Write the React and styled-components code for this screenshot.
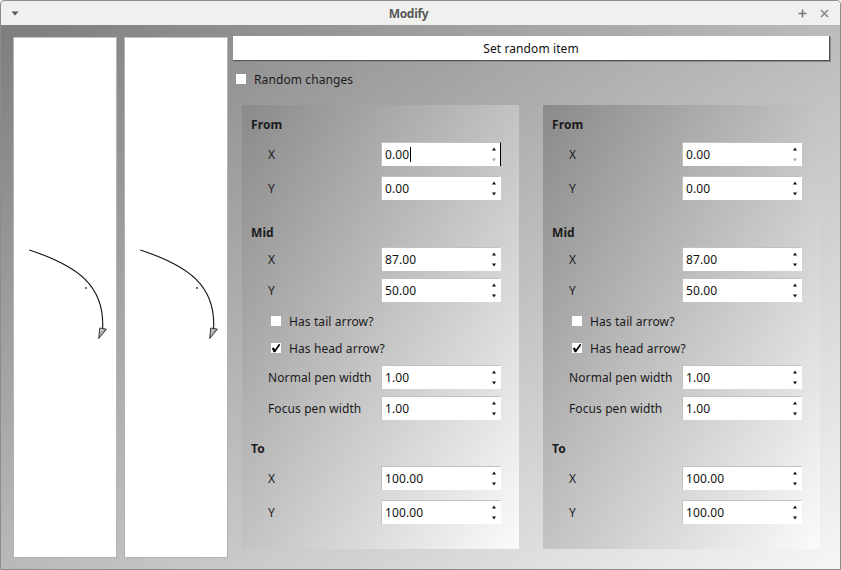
import React from 'react';
import styled, {createGlobalStyle} from 'styled-components';

const Global = createGlobalStyle`
    html, body {
        margin: 0;
        padding: 0;
        background: #ffffff;
    }

    body {
        font-family: "Noto Sans", "Open Sans", sans-serif;
        font-size: 12px;
        letter-spacing: 0.1px;
        color: #1b1b1b;
    }
`;

const sections = [
    {
        title: 'From',
        rows: [
            {kind: 'spin', label: 'X', value: '0.00', mt: 7, min: true},
            {kind: 'spin', label: 'Y', value: '0.00', mt: 10},
        ],
        mt: 0,
    },
    {
        title: 'Mid',
        rows: [
            {kind: 'spin', label: 'X', value: '87.00', mt: 4},
            {kind: 'spin', label: 'Y', value: '50.00', mt: 7},
            {kind: 'check', label: 'Has tail arrow?', checked: false, mt: 9},
            {kind: 'check', label: 'Has head arrow?', checked: true, mt: 7},
            {kind: 'spin', label: 'Normal pen width', value: '1.00', mt: 7},
            {kind: 'spin', label: 'Focus pen width', value: '1.00', mt: 7},
        ],
        mt: 23,
    },
    {
        title: 'To',
        rows: [
            {kind: 'spin', label: 'X', value: '100.00', mt: 7},
            {kind: 'spin', label: 'Y', value: '100.00', mt: 10},
        ],
        mt: 19,
    },
];

// heavy tick like the one in the checked box
const Tick = () => (
    <svg width="10" height="10" viewBox="0 0 10 10">
        <path d="M0.8 5.2 L2.9 4.4 L4 6.4 L8 0.8 L9.3 1.8 L4.2 9.2 L2.6 9.2 Z" fill="#000"/>
    </svg>
);

const Arrows = ({downDisabled}) => (
    <svg width="12" height="24" viewBox="0 0 12 24">
        <path d="M4 8.5 L8 8.5 L6 5.5 Z" fill="#111"/>
        <path d="M4 16.5 L8 16.5 L6 19.5 Z" fill={downDisabled ? '#a8a8a8' : '#111'}/>
    </svg>
);

const SpinBox = ({value, focused, downDisabled}) => (
    <Spin $focused={focused}>
        <SpinText>
            {value}
            {focused ? <Caret/> : null}
        </SpinText>
        <SpinButtons>
            <Arrows downDisabled={downDisabled}/>
        </SpinButtons>
    </Spin>
);

const Curve = () => (
    <svg width="102" height="519" viewBox="0 0 102 519">
        <defs>
            <linearGradient id="head" x1="0" y1="0" x2="1" y2="1">
                <stop offset="0" stopColor="#e4e4e4"/>
                <stop offset="1" stopColor="#6a6a6a"/>
            </linearGradient>
        </defs>
        <path d="M15.3 212 C 64 228, 91 248, 88.6 291" fill="none" stroke="#111" strokeWidth="1.1"/>
        <path d="M84.7 300.5 L85.8 290 L92.4 291.2 Z" fill="url(#head)" stroke="#222" strokeWidth="0.9"
              strokeLinejoin="round"/>
        <circle cx="72" cy="250" r="1.1" fill="#555"/>
    </svg>
);

const Group = ({focusFirst}) => (
    <GroupBox>
        {sections.map((s, si) => (
            <React.Fragment key={s.title}>
                <Header $mt={s.mt}>{s.title}</Header>
                {s.rows.map((r, ri) => r.kind === 'spin' ? (
                    <Row key={ri} $mt={r.mt}>
                        <Label>{r.label}</Label>
                        <SpinBox value={r.value} downDisabled={r.min}
                                 focused={focusFirst && si === 0 && ri === 0}/>
                    </Row>
                ) : (
                    <CheckRow key={ri} $mt={r.mt} $indent={20}>
                        <Box>{r.checked ? <Tick/> : null}</Box>
                        {r.label}
                    </CheckRow>
                ))}
            </React.Fragment>
        ))}
    </GroupBox>
);

export default function App() {
    return (
        <>
            <Global/>
            <Window>
                <TitleBar>
                    <svg width="8" height="5" viewBox="0 0 8 5">
                        <path d="M0.5 0.5 L7.5 0.5 L4 4.5 Z" fill="#555"/>
                    </svg>
                    <Title>Modify</Title>
                    <TitleButtons>
                        <svg width="9" height="9" viewBox="0 0 9 9">
                            <path d="M4.5 0.5 V8.5 M0.5 4.5 H8.5" stroke="#777" strokeWidth="1.6"/>
                        </svg>
                        <svg width="9" height="9" viewBox="0 0 9 9">
                            <path d="M1 1 L8 8 M8 1 L1 8" stroke="#888" strokeWidth="1.6"/>
                        </svg>
                    </TitleButtons>
                </TitleBar>
                <Body>
                    <Canvases>
                        <Canvas><Curve/></Canvas>
                        <Canvas><Curve/></Canvas>
                    </Canvases>
                    <Main>
                        <Button>Set random item</Button>
                        <CheckRow $mt={8} $indent={3}>
                            <Box/>
                            Random changes
                        </CheckRow>
                        <Groups>
                            <Group focusFirst/>
                            <Group/>
                        </Groups>
                    </Main>
                </Body>
            </Window>
        </>
    );
}

const Window = styled.div`
    width: 841px;
    height: 570px;
    box-sizing: border-box;
    border: 1px solid #8c8c8c;
    border-radius: 4px 4px 0 0;
    display: flex;
    flex-direction: column;
    overflow: hidden;
    background: linear-gradient(to bottom right, #7b7b7b, #f6f6f6);
`;

const TitleBar = styled.div`
    height: 24px;
    flex: none;
    display: flex;
    align-items: center;
    padding: 0 11px 0 10px;
    background: #f0f0ee;
`;

const Title = styled.div`
    flex: 1;
    text-align: center;
    font-weight: bold;
    font-size: 12px;
    color: #595959;
    letter-spacing: -0.3px;
`;

const TitleButtons = styled.div`
    display: flex;
    align-items: center;
    gap: 13px;
`;

const Body = styled.div`
    flex: 1;
    display: flex;
    gap: 5px;
    padding: 12px 10px 11px 12px;
    min-height: 0;
`;

const Canvases = styled.div`
    display: flex;
    gap: 7px;
`;

const Canvas = styled.div`
    width: 104px;
    box-sizing: border-box;
    background: #ffffff;
    border: 1px solid #b4b4ac;
    border-top-color: #c4c4bc;
    overflow: hidden;
`;

const Main = styled.div`
    flex: 1;
    display: flex;
    flex-direction: column;
    margin-top: -1px;
`;

const Button = styled.div`
    height: 24px;
    flex: none;
    display: flex;
    align-items: center;
    justify-content: center;
    background: #ffffff;
    border-bottom: 1px solid #555555;
    border-right: 1px solid #555555;
    box-shadow: 1px 1px 0 #8a8a8a;
    color: #111;
`;

const CheckRow = styled.div`
    height: 20px;
    flex: none;
    display: flex;
    align-items: center;
    gap: 8px;
    margin-top: ${p => p.$mt}px;
    padding-left: ${p => p.$indent}px;
`;

const Box = styled.div`
    width: 10px;
    height: 10px;
    background: #ffffff;
    flex: none;
    display: flex;
`;

const Groups = styled.div`
    flex: 1;
    display: flex;
    gap: 24px;
    margin-top: 16px;
    margin-bottom: 9px;
    padding: 0 10px 0 9px;
`;

const GroupBox = styled.div`
    flex: 1;
    display: flex;
    flex-direction: column;
    padding: 10px 18px 0 9px;
    background: linear-gradient(to bottom right, #8a8a8a, #fbfbfb);
`;

const Header = styled.div`
    height: 20px;
    line-height: 20px;
    font-weight: bold;
    margin-top: ${p => p.$mt}px;
`;

const Row = styled.div`
    height: 24px;
    display: flex;
    align-items: center;
    margin-top: ${p => p.$mt}px;
`;

const Label = styled.div`
    flex: 1;
    padding-left: 17px;
    white-space: nowrap;
`;

const Spin = styled.div`
    width: 120px;
    height: 24px;
    box-sizing: border-box;
    display: flex;
    background: #ffffff;
    border-top: 1px solid #c2c2ba;
    border-left: 1px solid #c2c2ba;
    border-right: 1px solid ${p => p.$focused ? '#000' : 'transparent'};
`;

const SpinText = styled.div`
    flex: 1;
    display: flex;
    align-items: center;
    padding-left: 3px;
    color: #111;
`;

const Caret = styled.span`
    width: 1px;
    height: 15px;
    background: #000;
    margin-left: 1px;
`;

const SpinButtons = styled.div`
    width: 12px;
    display: flex;
    margin-top: -1px;
`;
